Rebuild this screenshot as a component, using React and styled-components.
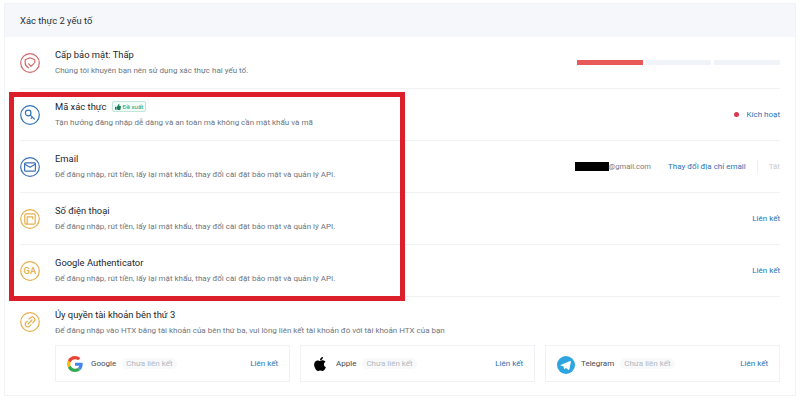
import React from 'react';
import styled, { createGlobalStyle } from 'styled-components';
import { FaApple, FaThumbsUp } from 'react-icons/fa';

const GlobalStyle = createGlobalStyle`
    html, body {
        margin: 0;
        padding: 0;
        width: 800px;
        height: 400px;
        overflow: hidden;
        background: #fff;
        font-family: Roboto, "Noto Sans", sans-serif;
    }
`;

const Page = styled.div`
    position: relative;
    width: 800px;
    height: 400px;
    padding: 3px 4px 4px;
    box-sizing: border-box;
`;

const Panel = styled.section`
    height: 393px;
    box-sizing: border-box;
    border: 1px solid #f1f3f6;
`;

const PanelHeader = styled.header`
    height: 33px;
    display: flex;
    align-items: center;
    padding-left: 15px;
    background: #f5f7fa;
    color: #2b2f36;
    font-size: 9.4px;
`;

const Rows = styled.div`
    padding: 0 15px;
`;

const Row = styled.div`
    display: flex;
    gap: 15px;
    height: ${({ $tall }) => ($tall ? '98px' : '52px')};
    border-bottom: ${({ $tall }) => ($tall ? 'none' : '1px solid #eff1f4')};
    box-sizing: border-box;
    align-items: ${({ $tall }) => ($tall ? 'flex-start' : 'center')};
    padding-top: ${({ $tall }) => ($tall ? '15px' : '0')};
`;

const IconBox = styled.div`
    flex: none;
    width: 20px;
    height: 20px;
    color: ${({ $color }) => $color};
    svg {
        display: block;
    }
`;

const Info = styled.div`
    flex: 1;
    min-width: 0;
    margin-top: ${({ $tall }) => ($tall ? '-4px' : '0')};
`;

const Title = styled.div`
    display: flex;
    align-items: center;
    gap: 5px;
    height: 13px;
    font-size: 9.4px;
    color: #22262c;
`;

const Desc = styled.div`
    margin-top: 4px;
    font-size: 8px;
    line-height: 12px;
    color: #6f757e;
    white-space: nowrap;
`;

const Badge = styled.span`
    display: inline-flex;
    align-items: center;
    gap: 2px;
    height: 9px;
    padding: 0 2px;
    border: 1px solid #bfe6d8;
    border-radius: 2px;
    background: #f3fbf8;
    color: #22a67a;
    font-size: 6.2px;
    svg {
        color: #15805c;
    }
`;

const Actions = styled.div`
    display: flex;
    align-items: center;
    flex: none;
    font-size: 8px;
`;

const ActionLink = styled.span`
    color: #2a74b5;
`;

const Muted = styled.span`
    color: #c8ccd2;
`;

const Dot = styled.span`
    width: 5px;
    height: 5px;
    border-radius: 50%;
    background: #d9384f;
    margin-right: 7px;
`;

const Meter = styled.div`
    display: flex;
    gap: 3px;
    width: 203px;
`;

const MeterBar = styled.div`
    flex: 1;
    height: 5px;
    background: ${({ $on }) => ($on ? '#e85a5a' : '#f0f3f8')};
`;

const EmailValue = styled.span`
    display: flex;
    align-items: center;
    color: #777c84;
    font-size: 7.6px;
    margin-right: 17px;
`;

const Redacted = styled.span`
    width: 34px;
    height: 9px;
    background: #000;
`;

const Separator = styled.span`
    width: 1px;
    height: 13px;
    background: #eceef1;
    margin: 0 11px;
`;

const Cards = styled.div`
    display: grid;
    grid-template-columns: repeat(3, 235px);
    gap: 10px;
    margin-top: 8px;
`;

const Card = styled.div`
    display: flex;
    align-items: center;
    height: 37px;
    box-sizing: border-box;
    padding: 0 11px;
    border: 1px solid #eff1f4;
    font-size: 8px;
`;

const CardIcon = styled.div`
    flex: none;
    width: 16px;
    height: 16px;
    margin-right: 8px;
    svg {
        display: block;
    }
`;

const CardName = styled.span`
    color: #444a52;
    margin-right: 6px;
`;

const CardStatus = styled.span`
    padding: 1px 4px;
    border-radius: 7px;
    background: #f7f9fb;
    color: #b3b8bf;
    font-size: 8px;
`;

const CardLink = styled(ActionLink)`
    margin-left: auto;
`;

const Highlight = styled.div`
    position: absolute;
    left: 9px;
    top: 92px;
    width: 396px;
    height: 209px;
    box-sizing: border-box;
    border: 5px solid #dc1f2b;
    pointer-events: none;
`;

const Ring = ({ children }) => (
    <svg width="20" height="20" viewBox="0 0 20 20" fill="none" stroke="currentColor" strokeWidth="1.2" strokeLinecap="round" strokeLinejoin="round">
        <circle cx="10" cy="10" r="9.3" />
        {children}
    </svg>
);

const ShieldIcon = () => (
    <Ring>
        <path d="M14.8 9.4V6.8L10 4.8 5.2 6.8V10c0 2.4 1.6 3.9 3.4 4.8" />
        <path d="M8.8 10.8l2.2 2.6 3-3" />
    </Ring>
);

const KeyIcon = () => (
    <Ring>
        <circle cx="8.2" cy="8" r="2.8" />
        <path d="M10.3 10.1l4.1 4.1M12.4 12.2l-1.2 1.2" />
    </Ring>
);

const MailIcon = () => (
    <Ring>
        <rect x="4.6" y="5.8" width="10.8" height="8.4" rx="1" />
        <path d="M4.8 7.2l5.2 3 5.2-3" />
    </Ring>
);

const PhoneIcon = () => (
    <Ring>
        <rect x="4.8" y="4.8" width="10.4" height="10.4" rx="1.4" />
        <path d="M7.2 15V7.8h5.6V10" />
    </Ring>
);

const GaIcon = () => (
    <Ring>
        <text x="10" y="13.2" textAnchor="middle" fontFamily="Roboto, sans-serif" fontSize="9.5" fontWeight="500" fill="currentColor" stroke="none">GA</text>
    </Ring>
);

const LinkIcon = () => (
    <Ring>
        <path d="M9 7.2l1.4-1.4a2.6 2.6 0 0 1 3.7 3.7l-1.4 1.4" />
        <path d="M11 12.8l-1.4 1.4a2.6 2.6 0 0 1-3.7-3.7l1.4-1.4" />
        <path d="M8 12l4-4" />
    </Ring>
);

const GoogleLogo = () => (
    <svg width="16" height="16" viewBox="0 0 48 48">
        <path fill="#EA4335" d="M24 9.5c3.5 0 6.7 1.2 9.2 3.6l6.9-6.9C35.9 2.4 30.5 0 24 0 14.6 0 6.5 5.4 2.6 13.2l8 6.2C12.5 13.6 17.8 9.5 24 9.5z" />
        <path fill="#4285F4" d="M47 24.5c0-1.6-.1-3.1-.4-4.5H24v9h12.9c-.6 3-2.2 5.5-4.7 7.2l7.7 6C44.4 37.9 47 31.8 47 24.5z" />
        <path fill="#FBBC05" d="M10.6 28.6A14.5 14.5 0 0 1 9.8 24c0-1.6.3-3.2.8-4.6l-8-6.2A24 24 0 0 0 0 24c0 3.9.9 7.5 2.6 10.8l8-6.2z" />
        <path fill="#34A853" d="M24 48c6.5 0 11.9-2.1 15.9-5.8l-7.7-6c-2.2 1.4-4.9 2.3-8.2 2.3-6.2 0-11.5-4.2-13.4-9.8l-8 6.2C6.5 42.6 14.6 48 24 48z" />
    </svg>
);

const TelegramLogo = () => (
    <svg width="18" height="18" viewBox="0 0 18 18">
        <circle cx="9" cy="9" r="9" fill="#2ca5e0" />
        <path fill="#fff" d="M3.6 8.9l9.6-3.8c.5-.2.9.1.7.8l-1.6 7.5c-.1.5-.5.7-.9.4L8.9 12l-1.2 1.1c-.2.2-.4.2-.5-.1l-.7-2.6-2.8-.9c-.5-.1-.5-.4-.1-.6z" />
    </svg>
);

const VERIFY_DESC = 'Để đăng nhập, rút tiền, lấy lại mật khẩu, thay đổi cài đặt bảo mật và quản lý API.';

const accounts = [
    { name: 'Google', logo: <GoogleLogo /> },
    { name: 'Apple', logo: <FaApple size={16} color="#000" /> },
    { name: 'Telegram', logo: <TelegramLogo /> },
];

const App = () => (
    <Page>
        <GlobalStyle />
        <Panel>
            <PanelHeader>Xác thực 2 yếu tố</PanelHeader>
            <Rows>
                <Row>
                    <IconBox $color="#d0686a"><ShieldIcon /></IconBox>
                    <Info>
                        <Title>Cấp bảo mật: Thấp</Title>
                        <Desc>Chúng tôi khuyên bạn nên sử dụng xác thực hai yếu tố.</Desc>
                    </Info>
                    <Meter>
                        <MeterBar $on />
                        <MeterBar />
                        <MeterBar />
                    </Meter>
                </Row>
                <Row>
                    <IconBox $color="#2f74b5"><KeyIcon /></IconBox>
                    <Info>
                        <Title>
                            Mã xác thực
                            <Badge><FaThumbsUp size={6} />Đề xuất</Badge>
                        </Title>
                        <Desc>Tận hưởng đăng nhập dễ dàng và an toàn mà không cần mật khẩu và mã</Desc>
                    </Info>
                    <Actions>
                        <Dot />
                        <ActionLink>Kích hoạt</ActionLink>
                    </Actions>
                </Row>
                <Row>
                    <IconBox $color="#3b72b8"><MailIcon /></IconBox>
                    <Info>
                        <Title>Email</Title>
                        <Desc>{VERIFY_DESC}</Desc>
                    </Info>
                    <Actions>
                        <EmailValue><Redacted />@gmail.com</EmailValue>
                        <ActionLink>Thay đổi địa chỉ email</ActionLink>
                        <Separator />
                        <Muted>Tắt</Muted>
                    </Actions>
                </Row>
                <Row>
                    <IconBox $color="#e5b04e"><PhoneIcon /></IconBox>
                    <Info>
                        <Title>Số điện thoại</Title>
                        <Desc>{VERIFY_DESC}</Desc>
                    </Info>
                    <Actions><ActionLink>Liên kết</ActionLink></Actions>
                </Row>
                <Row>
                    <IconBox $color="#e5b04e"><GaIcon /></IconBox>
                    <Info>
                        <Title>Google Authenticator</Title>
                        <Desc>{VERIFY_DESC}</Desc>
                    </Info>
                    <Actions><ActionLink>Liên kết</ActionLink></Actions>
                </Row>
                <Row $tall>
                    <IconBox $color="#e5b04e"><LinkIcon /></IconBox>
                    <Info $tall>
                        <Title>Ủy quyền tài khoản bên thứ 3</Title>
                        <Desc>Để đăng nhập vào HTX bằng tài khoản của bên thứ ba, vui lòng liên kết tài khoản đó với tài khoản HTX của bạn</Desc>
                        <Cards>
                            {accounts.map((account) => (
                                <Card key={account.name}>
                                    <CardIcon>{account.logo}</CardIcon>
                                    <CardName>{account.name}</CardName>
                                    <CardStatus>Chưa liên kết</CardStatus>
                                    <CardLink>Liên kết</CardLink>
                                </Card>
                            ))}
                        </Cards>
                    </Info>
                </Row>
            </Rows>
        </Panel>
        <Highlight />
    </Page>
);

export default App;
